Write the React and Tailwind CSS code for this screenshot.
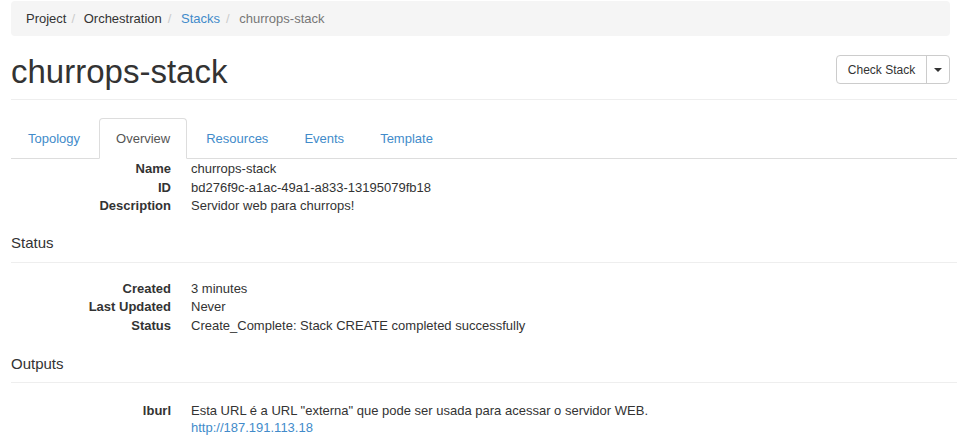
import { useState } from "react";

const overview = [
  { label: "Name", value: "churrops-stack" },
  { label: "ID", value: "bd276f9c-a1ac-49a1-a833-13195079fb18" },
  { label: "Description", value: "Servidor web para churrops!" },
];

const status = [
  { label: "Created", value: "3 minutes" },
  { label: "Last Updated", value: "Never" },
  { label: "Status", value: "Create_Complete: Stack CREATE completed successfully" },
];

const tabs = ["Topology", "Overview", "Resources", "Events", "Template"];

const DetailRow = ({ label, children }) => (
  <div className="flex leading-[18.5px]">
    <dt className="w-[160px] shrink-0 text-right font-bold">{label}</dt>
    <dd className="ml-[20px]">{children}</dd>
  </div>
);

const SectionTitle = ({ children, className }) => (
  <div className={`border-b border-[#eeeeee] text-[15px] leading-[18px] ${className}`}>
    {children}
  </div>
);

export default function App() {
  const [activeTab, setActiveTab] = useState("Overview");

  return (
    <div className="min-h-screen bg-white pl-[11px] text-[13px] text-[#333333] font-['Liberation_Sans',Arial,sans-serif]">
      {/* breadcrumb */}
      <ol className="mt-px mr-[7px] flex rounded bg-[#f5f5f5] px-[15px] py-[8px] leading-[19px]">
        <li>Project</li>
        <li className="flex">
          <span className="px-[5px] text-[#cccccc]">/&nbsp;</span>
          Orchestration
        </li>
        <li className="flex">
          <span className="px-[6px] text-[#cccccc]">/&nbsp;</span>
          <a href="#" className="text-[#428bca]">Stacks</a>
        </li>
        <li className="flex">
          <span className="px-[6px] text-[#cccccc]">/&nbsp;</span>
          <span className="text-[#777777]">churrops-stack</span>
        </li>
      </ol>

      {/* page header */}
      <div className="flex items-start justify-between border-b border-[#eeeeee] pt-[18px] pb-[9px]">
        <h1 className="text-[33px] leading-[36px] text-[#333333]">churrops-stack</h1>
        <div className="mt-px mr-[7px] flex h-[29px] rounded border border-[#cccccc] text-[12px]">
          <button className="w-[89px] text-center text-[#333333]">Check Stack</button>
          <button className="flex w-[23px] items-center justify-center border-l border-[#cccccc]">
            <span className="h-0 w-0 border-x-[4px] border-t-[4px] border-x-transparent border-t-[#333333]" />
          </button>
        </div>
      </div>

      {/* tabs */}
      <ul className="mt-[18px] flex border-b border-[#dddddd]">
        {tabs.map((tab) => (
          <li key={tab} className="-mb-px mr-[2px]">
            <a
              href="#"
              onClick={(e) => {
                e.preventDefault();
                setActiveTab(tab);
              }}
              className={
                tab === activeTab
                  ? "flex h-[41px] items-center rounded-t border border-[#dddddd] border-b-transparent bg-white px-[16px] text-[#555555]"
                  : "flex h-[41px] items-center border border-transparent px-[16px] text-[#428bca]"
              }
            >
              {tab}
            </a>
          </li>
        ))}
      </ul>

      <dl className="mt-px">
        {overview.map((row) => (
          <DetailRow key={row.label} label={row.label}>
            {row.value}
          </DetailRow>
        ))}
      </dl>

      <SectionTitle className="mt-[18px] pb-[10px]">Status</SectionTitle>
      <dl className="mt-[17px]">
        {status.map((row) => (
          <DetailRow key={row.label} label={row.label}>
            {row.value}
          </DetailRow>
        ))}
      </dl>

      <SectionTitle className="mt-[20px] pb-[9px]">Outputs</SectionTitle>
      <dl className="mt-[19px]">
        <DetailRow label="lburl">
          <div className="leading-[17px]">
            Esta URL é a URL "externa" que pode ser usada para acessar o servidor WEB.
          </div>
          <a href="#" className="block leading-[17px] text-[#428bca]">
            http://187.191.113.18
          </a>
        </DetailRow>
      </dl>
    </div>
  );
}
